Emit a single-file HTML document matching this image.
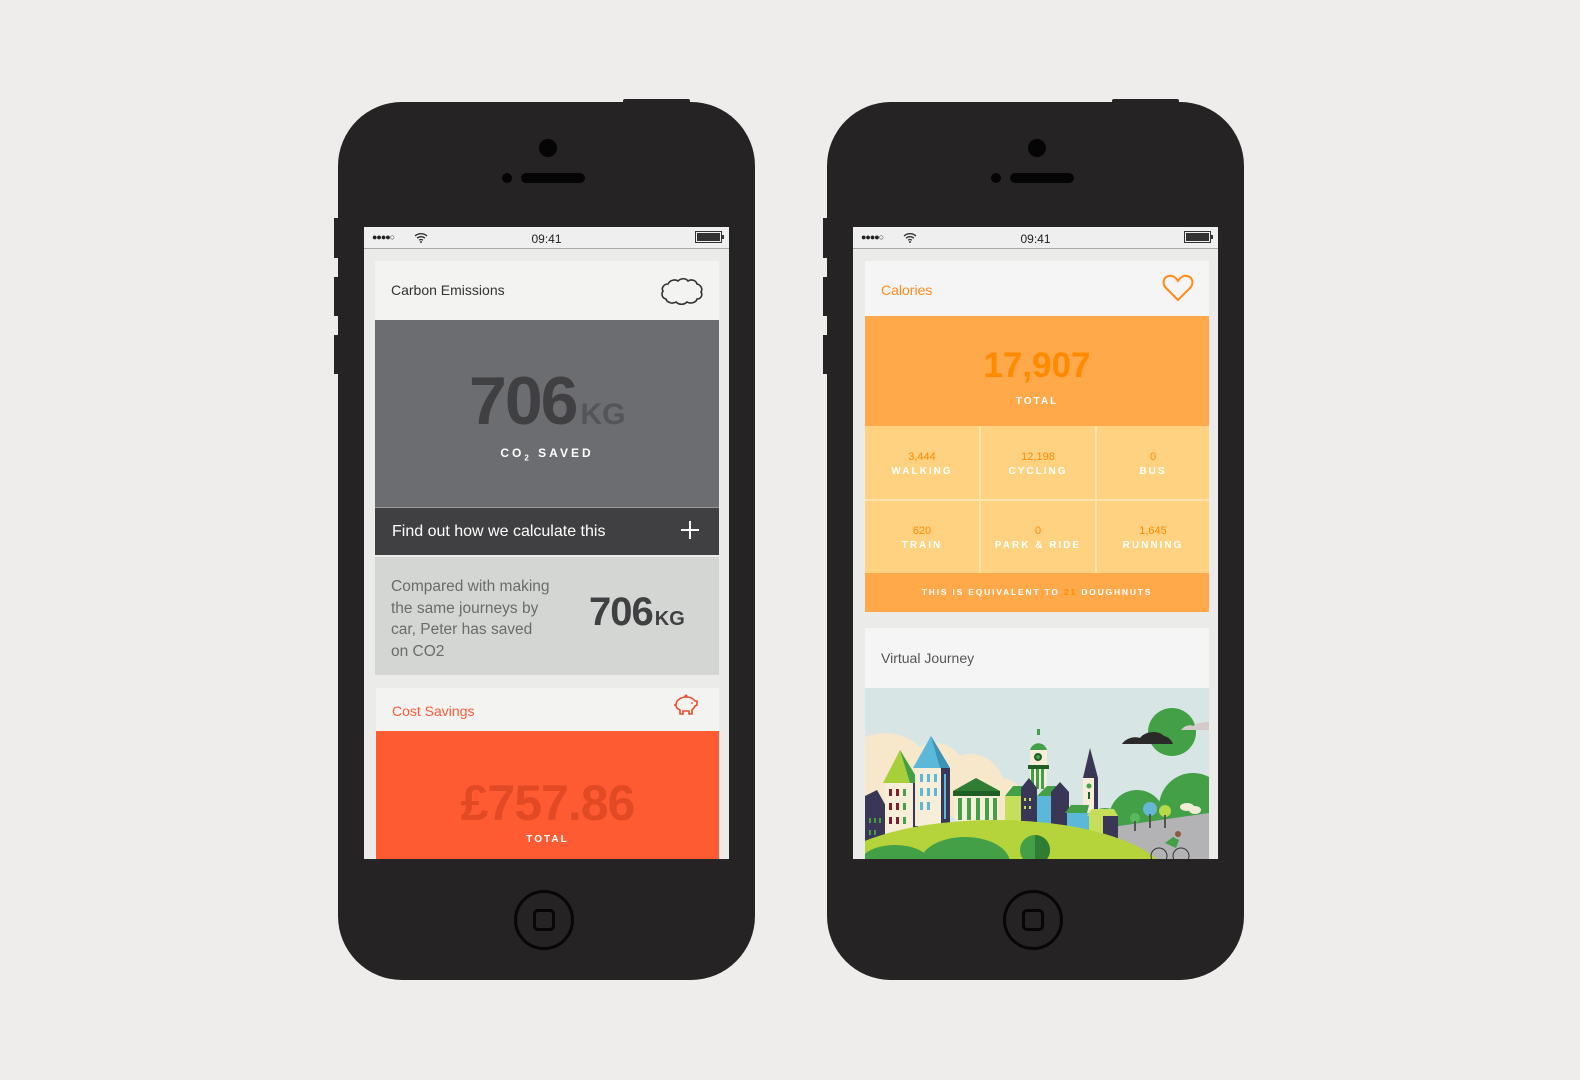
<!DOCTYPE html>
<html><head><meta charset="utf-8"><style>
*{margin:0;padding:0;box-sizing:border-box}
body{width:1580px;height:1080px;background:#eeedeb;position:relative;overflow:hidden;font-family:"Liberation Sans",sans-serif}
.a{position:absolute}
.phone{position:absolute;top:102px;width:417px;height:878px;background:#262324;border-radius:64px}
.btn{position:absolute;background:#262324}
.screen{position:absolute;top:227px;width:365px;height:632px;background:#ebebea;overflow:hidden}
.sb{position:absolute;left:0;top:0;width:365px;height:22px;background:#efefef;border-bottom:1px solid #a9a9a9;font-size:12px;color:#222}
.t{position:absolute;white-space:nowrap}
.c{text-align:center}
</style></head><body>

<!-- LEFT PHONE -->
<div class="btn" style="left:623px;top:99px;width:67px;height:6px;border-radius:2px"></div>
<div class="btn" style="left:334px;top:218px;width:6px;height:40px"></div>
<div class="btn" style="left:334px;top:277px;width:6px;height:39px"></div>
<div class="btn" style="left:334px;top:335px;width:6px;height:39px"></div>
<div class="phone" style="left:338px"></div>
<div class="a" style="left:539px;top:139px;width:18px;height:18px;border-radius:50%;background:#050505"></div>
<div class="a" style="left:502px;top:173px;width:10px;height:10px;border-radius:50%;background:#050505"></div>
<div class="a" style="left:521px;top:173px;width:64px;height:10px;border-radius:5px;background:#050505"></div>
<div class="a" style="left:514px;top:890px;width:60px;height:60px;border-radius:50%;border:3px solid #070707"></div>
<div class="a" style="left:533px;top:909px;width:22px;height:22px;border-radius:5px;border:3px solid #070707"></div>

<div class="screen" style="left:364px">
  <div class="sb">
    <div class="t" style="left:8px;top:5px;font-size:9px;letter-spacing:-1px">●●●●○</div>
    <svg class="a" style="left:50px;top:5px" width="14" height="11" viewBox="0 0 14 11"><path d="M1 4a9 9 0 0 1 12 0M3 6.2a6 6 0 0 1 8 0M5 8.3a3 3 0 0 1 4 0" fill="none" stroke="#333" stroke-width="1.3"/><circle cx="7" cy="10" r="1" fill="#333"/></svg>
    <div class="t c" style="left:0;width:365px;top:5px">09:41</div>
    <div class="a" style="left:331px;top:4px;width:27px;height:12px;border:1px solid #333;padding:1px"><div style="width:100%;height:100%;background:#333"></div></div>
    <div class="a" style="left:358px;top:8px;width:2px;height:4px;background:#333"></div>
  </div>
  <div class="a" style="left:11px;top:34px;width:344px;height:59px;background:#f3f3f2"></div>
  <div class="t" style="left:27px;top:55px;font-size:14px;color:#333">Carbon Emissions</div>
  <svg class="a" style="left:294px;top:49px" width="48" height="32" viewBox="0 0 48 32"><path d="M10 8c2-4 7-5 10-3 3-3 8-3 10 0 3-2 8-1 9 3 4 1 6 5 4 8 2 3 0 7-4 7-1 4-7 5-10 3-3 3-8 3-11 0-3 2-9 1-10-3-4-1-5-5-3-8-2-3 1-7 5-7z" fill="none" stroke="#333" stroke-width="1.6"/></svg>
  <div class="a" style="left:11px;top:93px;width:344px;height:187px;background:#6c6d71"></div>
  <div class="t" style="left:105px;top:135px;font-size:68px;font-weight:bold;color:#404043;letter-spacing:-2px">706<span style="font-size:30px;color:#545558;letter-spacing:0;margin-left:4px">KG</span></div>
  <div class="t c" style="left:11px;width:344px;top:219px;font-size:12px;color:#fff;letter-spacing:3px;font-weight:bold">CO<sub style="font-size:8px">2</sub> SAVED</div>
  <div class="a" style="left:11px;top:280px;width:344px;height:48px;background:#404042;border-top:1px solid #999"></div>
  <div class="t" style="left:28px;top:296px;font-size:16px;color:#fff">Find out how we calculate this</div>
  <div class="a" style="left:317px;top:302px;width:18px;height:2px;background:#fff"></div>
  <div class="a" style="left:325px;top:294px;width:2px;height:18px;background:#fff"></div>
  <div class="a" style="left:11px;top:330px;width:344px;height:118px;background:#d3d6d3"></div>
  <div class="t" style="left:27px;top:349px;font-size:15.5px;line-height:21.6px;color:#6b6b6b">Compared with making<br>the same journeys by<br>car, Peter has saved<br>on CO2</div>
  <div class="t" style="left:225px;top:363px;font-size:40px;font-weight:bold;color:#404043;letter-spacing:-1px">706<span style="font-size:20px;letter-spacing:0;margin-left:2px">KG</span></div>
  <div class="a" style="left:12px;top:461px;width:343px;height:43px;background:#f3f3f2"></div>
  <div class="t" style="left:28px;top:476px;font-size:14px;color:#ff5a36">Cost Savings</div>
  <svg class="a" style="left:308px;top:466px" width="28" height="24" viewBox="0 0 28 24"><path d="M4 12c0-5 5-8 10-8 4 0 7 1 9 4l2 0 0 4-2 1c-1 2-2 3-3 4v4h-3v-3h-6v3h-3v-4c-2-1-4-2-4-5zM4 12H2" fill="none" stroke="#e8502c" stroke-width="1.6"/><circle cx="14" cy="3" r="1.5" fill="#e8502c"/><circle cx="20" cy="10" r="0.9" fill="#e8502c"/></svg>
  <div class="a" style="left:12px;top:504px;width:343px;height:130px;background:#ff5b33"></div>
  <div class="t c" style="left:12px;width:343px;top:547px;font-size:50px;font-weight:bold;color:#e24a25;letter-spacing:-1px">£757.86</div>
  <div class="t c" style="left:12px;width:343px;top:607px;font-size:10px;font-weight:bold;color:#fff;letter-spacing:2px">TOTAL</div>
</div>

<!-- RIGHT PHONE -->
<div class="btn" style="left:1112px;top:99px;width:67px;height:6px;border-radius:2px"></div>
<div class="btn" style="left:823px;top:218px;width:6px;height:40px"></div>
<div class="btn" style="left:823px;top:277px;width:6px;height:39px"></div>
<div class="btn" style="left:823px;top:335px;width:6px;height:39px"></div>
<div class="phone" style="left:827px"></div>
<div class="a" style="left:1028px;top:139px;width:18px;height:18px;border-radius:50%;background:#050505"></div>
<div class="a" style="left:991px;top:173px;width:10px;height:10px;border-radius:50%;background:#050505"></div>
<div class="a" style="left:1010px;top:173px;width:64px;height:10px;border-radius:5px;background:#050505"></div>
<div class="a" style="left:1003px;top:890px;width:60px;height:60px;border-radius:50%;border:3px solid #070707"></div>
<div class="a" style="left:1022px;top:909px;width:22px;height:22px;border-radius:5px;border:3px solid #070707"></div>

<div class="screen" style="left:853px">
  <div class="sb">
    <div class="t" style="left:8px;top:5px;font-size:9px;letter-spacing:-1px">●●●●○</div>
    <svg class="a" style="left:50px;top:5px" width="14" height="11" viewBox="0 0 14 11"><path d="M1 4a9 9 0 0 1 12 0M3 6.2a6 6 0 0 1 8 0M5 8.3a3 3 0 0 1 4 0" fill="none" stroke="#333" stroke-width="1.3"/><circle cx="7" cy="10" r="1" fill="#333"/></svg>
    <div class="t c" style="left:0;width:365px;top:5px">09:41</div>
    <div class="a" style="left:331px;top:4px;width:27px;height:12px;border:1px solid #333;padding:1px"><div style="width:100%;height:100%;background:#333"></div></div>
    <div class="a" style="left:358px;top:8px;width:2px;height:4px;background:#333"></div>
  </div>
  <div class="a" style="left:12px;top:34px;width:344px;height:55px;background:#f5f5f5"></div>
  <div class="t" style="left:28px;top:55px;font-size:14px;color:#ff8a1a">Calories</div>
  <svg class="a" style="left:309px;top:46px" width="32" height="30" viewBox="0 0 32 30"><path d="M16 27L4 15C0 11 1 4 7 3c4-1 7 2 9 5 2-3 5-6 9-5 6 1 7 8 3 12z" fill="none" stroke="#ff8a1a" stroke-width="2"/></svg>
  <div class="a" style="left:12px;top:89px;width:344px;height:110px;background:#ffa94a"></div>
  <div class="t c" style="left:12px;width:344px;top:119px;font-size:35px;font-weight:bold;color:#ff8a00">17,907</div>
  <div class="t c" style="left:12px;width:344px;top:169px;font-size:10px;font-weight:bold;color:#fff;letter-spacing:2px">TOTAL</div>
  <div class="a" style="left:12px;top:199px;width:344px;height:147px;background:#ffd281"></div>
  <div class="a" style="left:126px;top:199px;width:2px;height:147px;background:#ffe3ae"></div>
  <div class="a" style="left:242px;top:199px;width:2px;height:147px;background:#ffe3ae"></div>
  <div class="a" style="left:12px;top:272px;width:344px;height:2px;background:#ffe3ae"></div>
  <div class="t c" style="left:12px;width:114px;top:223px;font-size:11px;color:#ff8a00;line-height:14px">3,444<br><span style="color:#fff;font-size:10px;letter-spacing:2px;font-weight:bold">WALKING</span></div>
  <div class="t c" style="left:128px;width:114px;top:223px;font-size:11px;color:#ff8a00;line-height:14px">12,198<br><span style="color:#fff;font-size:10px;letter-spacing:2px;font-weight:bold">CYCLING</span></div>
  <div class="t c" style="left:244px;width:112px;top:223px;font-size:11px;color:#ff8a00;line-height:14px">0<br><span style="color:#fff;font-size:10px;letter-spacing:2px;font-weight:bold">BUS</span></div>
  <div class="t c" style="left:12px;width:114px;top:297px;font-size:11px;color:#ff8a00;line-height:14px">620<br><span style="color:#fff;font-size:10px;letter-spacing:2px;font-weight:bold">TRAIN</span></div>
  <div class="t c" style="left:128px;width:114px;top:297px;font-size:11px;color:#ff8a00;line-height:14px">0<br><span style="color:#fff;font-size:10px;letter-spacing:2px;font-weight:bold">PARK &amp; RIDE</span></div>
  <div class="t c" style="left:244px;width:112px;top:297px;font-size:11px;color:#ff8a00;line-height:14px">1,645<br><span style="color:#fff;font-size:10px;letter-spacing:2px;font-weight:bold">RUNNING</span></div>
  <div class="a" style="left:12px;top:346px;width:344px;height:39px;background:#ffa94a"></div>
  <div class="t c" style="left:12px;width:344px;top:360px;font-size:8.5px;font-weight:bold;color:#fff;letter-spacing:1.8px">THIS IS EQUIVALENT TO <span style="color:#ff8a00">21</span> DOUGHNUTS</div>
  <div class="a" style="left:12px;top:401px;width:344px;height:60px;background:#f5f5f5"></div>
  <div class="t" style="left:28px;top:423px;font-size:14px;color:#555">Virtual Journey</div>
  <svg class="a" style="left:12px;top:461px" width="344" height="171" viewBox="0 0 344 171">
    <rect width="344" height="171" fill="#d7e6e5"/>
    <circle cx="20" cy="95" r="50" fill="#f7e8cc"/>
    <circle cx="70" cy="85" r="30" fill="#f7e8cc"/>
    <circle cx="105" cy="100" r="34" fill="#f7e8cc"/>
    <circle cx="135" cy="115" r="25" fill="#f7e8cc"/>
    <circle cx="307" cy="44" r="24" fill="#43a047"/>
    <path d="M257 56c4-6 12-8 18-6 5-7 18-8 24-2 5 1 8 5 9 8z" fill="#2b2a2a"/>
    <path d="M316 42c3-4 8-6 12-4 4-3 10-4 16-4v8z" fill="#d6c9c9"/>
    <circle cx="328" cy="119" r="34" fill="#43a047"/>
    <circle cx="272" cy="130" r="28" fill="#43a047"/>
    <circle cx="240" cy="140" r="20" fill="#43a047"/>
    <path d="M240 140L344 125V171H240z" fill="#b3b3b5"/>
    <circle cx="285" cy="121" r="7" fill="#66b6d6"/><rect x="284" y="126" width="2" height="14" fill="#555"/>
    <circle cx="300" cy="123" r="6" fill="#b8d94a"/><rect x="299" y="127" width="2" height="13" fill="#555"/>
    <circle cx="270" cy="130" r="5" fill="#5cb85c"/><rect x="269" y="133" width="2" height="10" fill="#555"/>
    <ellipse cx="322" cy="119" rx="7" ry="4" fill="#f1ecd6"/><ellipse cx="330" cy="122" rx="6" ry="4" fill="#f1ecd6"/>
    <path d="M0 108l12-6 10 18v48H0z" fill="#3a3656"/>
    <g fill="#43a047"><rect x="4" y="130" width="2" height="5"/><rect x="9" y="130" width="2" height="5"/><rect x="14" y="130" width="2" height="5"/><rect x="4" y="142" width="2" height="5"/><rect x="9" y="142" width="2" height="5"/></g>
    <path d="M18 95L35 62 55 95z" fill="#a8cf3a"/><path d="M35 62L55 95H45z" fill="#43a047"/>
    <rect x="20" y="95" width="33" height="60" fill="#f6eed8"/><rect x="48" y="95" width="5" height="60" fill="#3a3656"/>
    <g fill="#7a1f2b"><rect x="24" y="101" width="3" height="7"/><rect x="31" y="101" width="3" height="7"/><rect x="24" y="115" width="3" height="7"/><rect x="31" y="115" width="3" height="7"/><rect x="24" y="129" width="3" height="7"/><rect x="31" y="129" width="3" height="7"/></g>
    <g fill="#43a047"><rect x="38" y="101" width="3" height="7"/><rect x="38" y="115" width="3" height="7"/><rect x="38" y="129" width="3" height="7"/></g>
    <path d="M48 80L66 48 85 80z" fill="#5bb8d8"/><path d="M66 48L85 80H75z" fill="#3b94b8"/>
    <rect x="50" y="80" width="35" height="58" fill="#f6eed8"/><rect x="76" y="80" width="9" height="58" fill="#3a3656"/>
    <g fill="#5bb8d8"><rect x="55" y="86" width="3" height="8"/><rect x="62" y="86" width="3" height="8"/><rect x="69" y="86" width="3" height="8"/><rect x="55" y="100" width="3" height="8"/><rect x="62" y="100" width="3" height="8"/><rect x="69" y="100" width="3" height="8"/><rect x="55" y="114" width="3" height="8"/><rect x="62" y="114" width="3" height="8"/><rect x="79" y="86" width="2" height="45"/></g>
    <path d="M88 103l23-13 24 13z" fill="#2e7d32"/><rect x="88" y="103" width="47" height="5" fill="#1f5e25"/>
    <rect x="90" y="108" width="43" height="25" fill="#f6eed8"/>
    <g fill="#43a047"><rect x="93" y="110" width="4" height="22"/><rect x="102" y="110" width="4" height="22"/><rect x="111" y="110" width="4" height="22"/><rect x="120" y="110" width="4" height="22"/><rect x="128" y="110" width="4" height="22"/></g>
    <rect x="172" y="41" width="3" height="6" fill="#43a047"/>
    <path d="M165 62a9 10 0 0 1 17 0z" fill="#43a047"/>
    <rect x="165" y="62" width="17" height="15" fill="#f6eed8"/><circle cx="173" cy="69" r="4" fill="#1f5e25"/><circle cx="173" cy="69" r="2" fill="#43a047"/>
    <rect x="163" y="77" width="21" height="4" fill="#1f5e25"/>
    <rect x="165" y="81" width="17" height="20" fill="#f6eed8"/>
    <g fill="#43a047"><rect x="166" y="81" width="3" height="20"/><rect x="171" y="81" width="3" height="20"/><rect x="176" y="81" width="3" height="20"/></g>
    <path d="M140 108l8-10h18l6 10z" fill="#43a047"/><rect x="140" y="108" width="18" height="30" fill="#c6df5a"/>
    <rect x="156" y="100" width="16" height="40" fill="#3a3656"/><path d="M156 100l8-10 8 10z" fill="#3a3656"/>
    <rect x="172" y="108" width="16" height="32" fill="#5bb8d8"/><path d="M172 108l10-10h12l-6 10z" fill="#43a047"/>
    <rect x="186" y="104" width="18" height="36" fill="#3a3656"/><path d="M186 104l9-10 9 10z" fill="#3a3656"/>
    <g fill="#c6df5a"><rect x="159" y="110" width="2" height="3"/><rect x="164" y="110" width="2" height="3"/><rect x="159" y="118" width="2" height="3"/><rect x="164" y="118" width="2" height="3"/></g>
    <path d="M218 90l7-30 8 30z" fill="#3a3656"/><rect x="218" y="90" width="15" height="40" fill="#f6eed8"/><rect x="229" y="90" width="4" height="40" fill="#3a3656"/><circle cx="224" cy="98" r="2.5" fill="#43a047"/><rect x="223" y="104" width="2" height="7" fill="#1f5e25"/>
    <rect x="202" y="125" width="22" height="36" fill="#5bb8d8"/><path d="M200 125l6-8h18l-2 8z" fill="#43a047"/>
    <rect x="224" y="128" width="29" height="37" fill="#3a3656"/><rect x="224" y="128" width="14" height="30" fill="#c6df5a"/><path d="M222 128l5-7h22l4 7z" fill="#c6df5a"/>
    <ellipse cx="130" cy="195" rx="175" ry="63" fill="#b5d43b"/>
    <ellipse cx="30" cy="175" rx="35" ry="18" fill="#43a047"/>
    <ellipse cx="100" cy="175" rx="45" ry="26" fill="#43a047"/>
    <circle cx="170" cy="162" r="15" fill="#43a047"/><path d="M170 147a15 15 0 0 1 0 30z" fill="#2e7d32"/>
    <g fill="none" stroke="#333" stroke-width="1"><circle cx="294" cy="168" r="8"/><circle cx="316" cy="168" r="8"/></g>
    <path d="M300 155l8-6 6 3-3 8z" fill="#43a047"/><circle cx="313" cy="146" r="3" fill="#8a5a3a"/>
  </svg>
</div>
</body></html>
